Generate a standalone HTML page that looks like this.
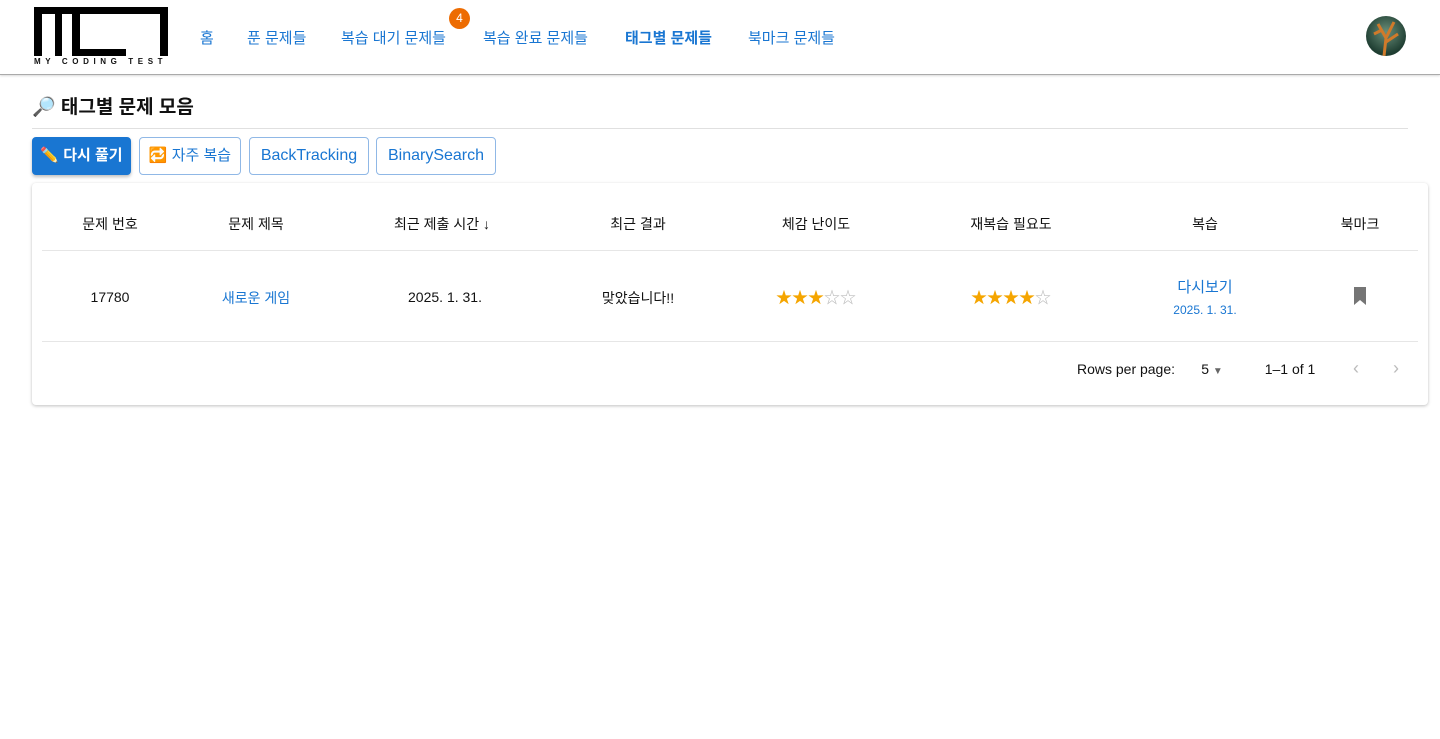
<!DOCTYPE html>
<html><head><meta charset="utf-8"><style>
*{box-sizing:border-box;margin:0;padding:0}
body{width:1440px;height:739px;background:#fff;font-family:"Liberation Sans","Noto Sans CJK KR",sans-serif;color:#111;position:relative;overflow:hidden}
.hdr{position:absolute;left:0;top:0;width:1440px;height:75px;border-bottom:1px solid #aaa;box-shadow:0 1px 2px rgba(0,0,0,.15)}
.b{position:absolute;background:#000}
.nav{position:absolute;top:27px;font-size:15px;color:#1976d2}
.badge{position:absolute;left:449px;top:8px;width:21px;height:21px;border-radius:50%;background:#ed6c02;color:#fff;font-size:12px;text-align:center;line-height:21px}
.av{position:absolute;left:1366px;top:16px;width:40px;height:40px;border-radius:50%;background:radial-gradient(circle at 50% 40%,#6a8f7a,#1f3e32 70%);overflow:hidden}
h1{position:absolute;left:32px;top:92px;font-size:19px;font-weight:bold}
.hr{position:absolute;left:32px;top:128px;width:1376px;height:1px;background:#e0e0e0}
.btn{position:absolute;top:137px;height:38px;border:1px solid #90b8e6;border-radius:4px;color:#1976d2;font-size:16px;line-height:36px;padding:0;text-align:center;white-space:nowrap}
.card{position:absolute;left:32px;top:183px;width:1396px;height:222px;border-radius:4px;box-shadow:0 1px 3px rgba(0,0,0,.25)}
.c{position:absolute;font-size:14px;transform:translateX(-50%);white-space:nowrap}
.ln{position:absolute;left:42px;width:1376px;height:1px;background:#e6e6e6}
.st{color:#f5a500;font-size:16px;letter-spacing:0}
.st i{font-style:normal;color:#bbb}
</style></head><body>
<div class="hdr">
<div class="b" style="left:34px;top:7px;width:134px;height:7px"></div>
<div class="b" style="left:34px;top:7px;width:8px;height:49px"></div>
<div class="b" style="left:55px;top:7px;width:7px;height:49px"></div>
<div class="b" style="left:72px;top:14px;width:8px;height:42px"></div>
<div class="b" style="left:72px;top:49px;width:54px;height:7px"></div>
<div class="b" style="left:160px;top:7px;width:8px;height:49px"></div>
<div style="position:absolute;left:34px;top:57px;font-size:8px;letter-spacing:4.6px;font-weight:bold">MY CODING TEST</div>
<div class="nav" style="left:200px">홈</div>
<div class="nav" style="left:247px">푼 문제들</div>
<div class="nav" style="left:341px">복습 대기 문제들</div>
<div class="badge">4</div>
<div class="nav" style="left:483px">복습 완료 문제들</div>
<div class="nav" style="left:625px;font-weight:bold">태그별 문제들</div>
<div class="nav" style="left:748px">북마크 문제들</div>
<div class="av"><svg width="40" height="40"><path d="M18 40 L20 22 L12 8 M20 22 L28 6 M20 26 L32 18 M16 14 L8 18" stroke="#d07a2a" stroke-width="3" fill="none"/></svg></div>
</div>
<h1>🔎 태그별 문제 모음</h1>
<div class="hr"></div>
<div class="btn" style="left:32px;width:99px;background:#1976d2;border-color:#1976d2;color:#fff;font-weight:bold;font-size:15px;box-shadow:0 2px 3px rgba(0,0,0,.25)">✏️ 다시 풀기</div>
<div class="btn" style="left:139px;width:102px;font-size:15px">🔁 자주 복습</div>
<div class="btn" style="left:249px;width:120px">BackTracking</div>
<div class="btn" style="left:376px;width:120px">BinarySearch</div>
<div class="card"></div>
<div class="c" style="left:110px;top:214px">문제 번호</div>
<div class="c" style="left:256px;top:214px">문제 제목</div>
<div class="c" style="left:442px;top:214px">최근 제출 시간 ↓</div>
<div class="c" style="left:638px;top:214px">최근 결과</div>
<div class="c" style="left:816px;top:214px">체감 난이도</div>
<div class="c" style="left:1011px;top:214px">재복습 필요도</div>
<div class="c" style="left:1205px;top:214px">복습</div>
<div class="c" style="left:1360px;top:214px">북마크</div>
<div class="ln" style="top:250px"></div>
<div class="c" style="left:110px;top:289px">17780</div>
<div class="c" style="left:256px;top:288px;color:#1976d2">새로운 게임</div>
<div class="c" style="left:445px;top:289px">2025. 1. 31.</div>
<div class="c" style="left:638px;top:288px">맞았습니다!!</div>
<div class="c st" style="left:816px;top:284px">★★★<i>☆☆</i></div>
<div class="c st" style="left:1011px;top:284px">★★★★<i>☆</i></div>
<div class="c" style="left:1205px;top:276px;color:#1976d2;font-size:15px">다시보기</div>
<div class="c" style="left:1205px;top:303px;color:#1976d2;font-size:12px">2025. 1. 31.</div>
<svg style="position:absolute;left:1353px;top:287px" width="14" height="18"><path d="M1 0h12v18l-6-5-6 5z" fill="#757575"/></svg>
<div class="ln" style="top:341px"></div>
<div class="c" style="left:1126px;top:361px">Rows per page:</div>
<div class="c" style="left:1212px;top:361px">5 <span style="color:#666;font-size:10px">▼</span></div>
<div class="c" style="left:1290px;top:361px">1–1 of 1</div>
<div class="c" style="left:1356px;top:358px;color:#bbb;font-size:18px">‹</div>
<div class="c" style="left:1396px;top:358px;color:#bbb;font-size:18px">›</div>
</body></html>
